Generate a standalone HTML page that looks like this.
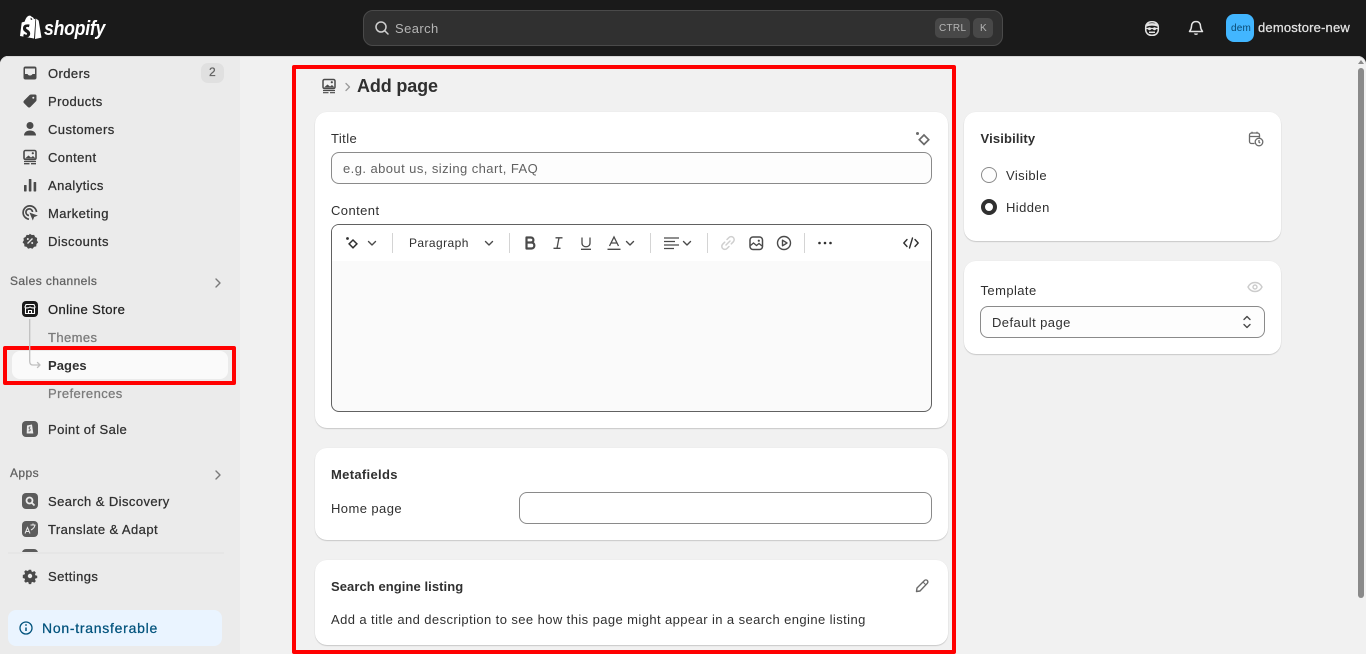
<!DOCTYPE html>
<html lang="en"><head><meta charset="utf-8"><title>Add page</title>
<style>
*{box-sizing:border-box}
html,body{margin:0;padding:0;width:1366px;height:654px;overflow:hidden;background:#1a1a1a;font-family:"Liberation Sans",sans-serif;color:#303030}
.a{position:absolute}
.t{position:absolute;white-space:nowrap;font-size:13px;line-height:16px;letter-spacing:.42px;color:#303030}
.m{-webkit-text-stroke:.25px currentColor}
.b{font-weight:700;letter-spacing:.1px}
.g{color:#616161}
.i{position:absolute;width:20px;height:20px;overflow:visible}
.card{position:absolute;background:#fff;border-radius:12px;box-shadow:0 1px 1px rgba(0,0,0,.16),0 0 1px rgba(0,0,0,.08)}
.input{position:absolute;background:#fdfdfd;border:1px solid #8a8a8a;border-radius:8px}
.sep{position:absolute;top:233px;width:1px;height:20px;background:#d4d4d4}
.red{position:absolute;border:4px solid #f00;box-sizing:border-box}
</style></head>
<body>
<!-- top bar -->
<div class="a" style="left:0;top:0;width:1366px;height:56px;background:#1a1a1a"></div>
<svg class="a" style="left:20px;top:15px" width="22" height="26" viewBox="0 0 22 26"><path d="M15.500 3.600 14 4.100C13.600 2.900 13 2 11.800 2 11.300 1 10.500.6 9.900.6 6.700.6 5.200 4.600 4.700 6.600L2.400 7.300C1.700 7.500 1.700 7.500 1.600 8.200L0 21 14 23.500ZM12.500 4.500 10.800 5C10.800 4.200 10.700 3.300 10.400 2.700 11.400 2.800 12 3.700 12.500 4.500Z" fill="#fff"/><path d="M16.200 3.600 15 24 21.500 22.600 18.700 5.800C18.600 5.500 18.400 5.300 18.200 5.300Z" fill="#fff"/><path d="M9.600 9.600 8.900 12.200C7.600 11.600 6 11.800 6 13 6 14.500 10.200 15 10.200 18.500 10.200 21.200 8.400 22.600 6 22.400 4.700 22.300 3.700 21.700 3.200 21.200L3.900 18.800C4.800 19.500 7 20.500 7.100 18.900 7.200 17.200 3.200 17.200 3 13.600 2.900 10.600 5 8.700 9.600 9.600Z" fill="#1a1a1a"/></svg>
<div class="t" style="left:44px;top:17px;font-size:20px;line-height:24px;font-weight:700;font-style:italic;color:#fff;letter-spacing:-.3px;transform:scaleX(.885);transform-origin:0 50%">shopify</div>

<div class="a" style="left:363px;top:10px;width:640px;height:36px;background:#303030;border:1px solid #4a4a4a;border-radius:10px"></div>
<svg class="i" style="left:372px;top:18px" viewBox="0 0 20 20" fill="none" stroke="#cfcfcf" stroke-width="1.500" stroke-linecap="round"><circle cx="9" cy="9" r="5"/><path d="m13 13 3 3"/></svg>
<div class="t" style="left:395px;top:21px;color:#b5b5b5">Search</div>
<div class="a" style="left:935px;top:18px;width:35px;height:20px;background:#484848;border-radius:5px"></div>
<div class="t" style="left:939px;top:21px;font-size:10px;letter-spacing:.3px;color:#b5b5b5">CTRL</div>
<div class="a" style="left:973px;top:18px;width:20px;height:20px;background:#484848;border-radius:5px"></div>
<div class="t" style="left:980px;top:21px;font-size:10px;letter-spacing:0;color:#b5b5b5">K</div>

<svg class="i" style="left:1142px;top:18px" viewBox="0 0 20 20" fill="none"><rect x="3.700" y="3.700" width="12.600" height="13.600" rx="5.500" fill="#1a1a1a" stroke="#e3e3e3" stroke-width="1.500"/><path d="M4 7.500c4-1.500 8-1.500 12 0" stroke="#e3e3e3" stroke-width="2.500"/><path d="M4 10.500h12" stroke="#e3e3e3" stroke-width="1.300"/><circle cx="7.500" cy="10.700" r="1.500" fill="#e3e3e3"/><circle cx="12.500" cy="10.700" r="1.500" fill="#e3e3e3"/><path d="M7 14.300h6" stroke="#e3e3e3" stroke-width="1.500"/></svg>
<svg class="i" style="left:1186px;top:18px" viewBox="0 0 20 20" fill="none" stroke="#e3e3e3" stroke-width="1.500" stroke-linejoin="round"><path d="M10 3.500c-2.800 0-4.500 2-4.500 4.600 0 2.700-1 4-2 5.400h13c-1-1.400-2-2.700-2-5.400 0-2.600-1.700-4.600-4.500-4.600Z"/><path d="M8.500 15.500c.4 1 2.600 1 3 0"/></svg>
<div class="a" style="left:1226px;top:14px;width:28px;height:28px;background:#42b6ff;border-radius:8px"></div>
<div class="t" style="left:1231px;top:21px;font-size:10px;letter-spacing:.2px;color:#0a4a72">dem</div>
<div class="t m" style="left:1258px;top:20px;color:#e3e3e3;letter-spacing:.18px">demostore-new</div>

<!-- main surfaces -->
<div class="a" style="left:0;top:56px;width:1366px;height:598px;background:#f1f1f1;border-radius:8px 8px 0 0;box-shadow:inset 0 1px 0 #d8d8d8"></div>
<div class="a" style="left:0;top:56px;width:240px;height:598px;background:#ebebeb;border-radius:8px 0 0 0;box-shadow:inset 0 1px 0 #d8d8d8"></div>
<div class="a" style="left:1358px;top:68px;width:6px;height:530px;background:#8a8a8a;border-radius:3px"></div>
<div class="a" style="left:1358px;top:60px;width:0;height:0;border:3px solid transparent;border-bottom:4px solid #8a8a8a;border-top:0"></div>

<!-- sidebar -->
<svg class="i" style="left:20px;top:63px" viewBox="0 0 20 20" fill="#4a4a4a"><path d="M5.500 3.500h9a2 2 0 0 1 2 2v9a2 2 0 0 1-2 2h-9a2 2 0 0 1-2-2v-9a2 2 0 0 1 2-2Zm-.5 2v5.500h2.500c.5 1 1.300 1.500 2.500 1.500s2-.5 2.500-1.500H15V5.500Z" fill-rule="evenodd"/></svg>
<div class="t m" style="left:48px;top:66px">Orders</div>
<div class="a" style="left:201px;top:63px;width:23px;height:20px;background:#e0e0e0;border-radius:7px"></div>
<div class="t m g" style="left:209px;top:64px;font-size:12px;letter-spacing:0">2</div>

<svg class="i" style="left:20px;top:91px" viewBox="0 0 20 20" fill="#4a4a4a"><path d="M11 3.500h4a1.500 1.500 0 0 1 1.500 1.500v4c0 .6-.2 1-.6 1.400l-5.400 5.500a2 2 0 0 1-2.800 0l-3.600-3.600a2 2 0 0 1 0-2.800L9.600 4c.4-.3.9-.5 1.400-.5Z"/><circle cx="13.300" cy="6.700" r="1" fill="#ebebeb"/></svg>
<div class="t m" style="left:48px;top:94px">Products</div>

<svg class="i" style="left:20px;top:119px" viewBox="0 0 20 20" fill="#4a4a4a"><circle cx="10" cy="6.500" r="3.500"/><path d="M4 16.500c0-3 2.500-5 6-5s6 2 6 5Z"/></svg>
<div class="t m" style="left:48px;top:122px">Customers</div>

<svg class="i" style="left:20px;top:147px" viewBox="0 0 20 20"><rect x="4" y="3.500" width="12" height="9" rx="1.500" fill="none" stroke="#4a4a4a" stroke-width="1.600"/><path d="M5 11.500 8.500 8.500l2.500 2 2-1.500 2 2v.5Z" fill="#4a4a4a"/><circle cx="12.800" cy="6.200" r="1.100" fill="#4a4a4a"/><path d="M4 14.500h12M4 16.700h5.500M11 16.700h5" stroke="#4a4a4a" stroke-width="1.300"/></svg>
<div class="t m" style="left:48px;top:150px">Content</div>

<svg class="i" style="left:20px;top:175px" viewBox="0 0 20 20" fill="#4a4a4a"><rect x="4" y="10" width="2.600" height="6.500" rx=".6"/><rect x="8.800" y="4" width="2.600" height="12.500" rx=".6"/><rect x="13.600" y="7" width="2.600" height="9.500" rx=".6"/></svg>
<div class="t m" style="left:48px;top:178px">Analytics</div>

<svg class="i" style="left:20px;top:203px" viewBox="0 0 20 20" fill="none" stroke="#4a4a4a" stroke-width="1.700"><path d="M9 16.200A6.700 6.700 0 1 1 16.500 9"/><path d="M9 12.500a3.300 3.300 0 1 1 3.500-3.500"/><path d="m10 10 7 2.600-3 1.100-1.200 3Z" fill="#4a4a4a" stroke-width=".6"/></svg>
<div class="t m" style="left:48px;top:206px">Marketing</div>

<svg class="i" style="left:20px;top:231px" viewBox="0 0 20 20"><path d="M10 2.500l2 1.300 2.400-.2 1 2.200 2.100 1.100-.3 2.400 1.300 2-1.700 1.700-.2 2.400-2.300.5-1.500 1.900-2.200-.8-2.300.8-1.500-1.900-2.300-.5-.2-2.400-1.700-1.700 1.300-2-.3-2.400 2.100-1.100 1-2.200 2.400.2Z" fill="#4a4a4a" transform="translate(0 .3) scale(.98)"/><path d="M7.500 12.500l5-5" stroke="#ebebeb" stroke-width="1.300"/><circle cx="7.800" cy="8" r="1" fill="#ebebeb"/><circle cx="12.200" cy="12" r="1" fill="#ebebeb"/></svg>
<div class="t m" style="left:48px;top:234px">Discounts</div>

<div class="t m g" style="left:10px;top:273px;font-size:12px;letter-spacing:.42px">Sales channels</div>
<svg class="i" style="left:208px;top:273px" viewBox="0 0 20 20" fill="none" stroke="#7a7a7a" stroke-width="1.400" stroke-linecap="round" stroke-linejoin="round"><path d="m8 6 4 4-4 4"/></svg>

<div class="a" style="left:22px;top:301px;width:16px;height:16px;background:#1a1a1a;border-radius:4px"></div>
<svg class="a" style="left:22px;top:301px" width="16" height="16" viewBox="0 0 16 16" fill="none" stroke="#fff" stroke-width="1.100"><path d="M3.500 6.500v6h9v-6M3 6l1-2.500h8L13 6c0 1.300-3.300 1.300-5 0-1.700 1.300-5 1.300-5 0ZM6.500 12.500V9.500h3v3"/></svg>
<div class="t m" style="left:48px;top:302px;color:#1f1f1f">Online Store</div>
<div class="t m" style="left:48px;top:330px;color:#7a7a7a">Themes</div>

<div class="a" style="left:12px;top:351px;width:216px;height:28px;background:#fafafa;border-radius:8px"></div>
<svg class="a" style="left:28px;top:319px;z-index:2" width="14" height="52" viewBox="0 0 14 52" fill="none" stroke="#c0c0c0" stroke-width="1.300" stroke-linecap="round" stroke-linejoin="round"><path d="M1.700 0v42c0 2.500 1 4 3 4h7.300M9.500 43.500 12 46l-2.500 2.500"/></svg>
<div class="t b" style="left:48px;top:358px;color:#303030;letter-spacing:.08px">Pages</div>
<div class="t m" style="left:48px;top:386px;color:#7a7a7a">Preferences</div>
<div class="red" style="left:3px;top:346px;width:233px;height:39px;border-radius:2px"></div>

<div class="a" style="left:22px;top:421px;width:16px;height:16px;background:#5c5c5c;border-radius:4px"></div>
<svg class="a" style="left:22px;top:421px" width="16" height="16" viewBox="0 0 16 16"><path d="M5 4.500 10 3.500 11.300 12.500H4.700Z" fill="#ebebeb"/><path d="M8.500 6c-1.600-.3-1.900 1.200-.8 2 1 .8.500 2.300-1.200 1.800" fill="none" stroke="#5c5c5c" stroke-width=".9"/></svg>
<div class="t m" style="left:48px;top:422px">Point of Sale</div>

<div class="t m g" style="left:10px;top:465px;font-size:12px;letter-spacing:.42px">Apps</div>
<svg class="i" style="left:208px;top:465px" viewBox="0 0 20 20" fill="none" stroke="#7a7a7a" stroke-width="1.400" stroke-linecap="round" stroke-linejoin="round"><path d="m8 6 4 4-4 4"/></svg>

<div class="a" style="left:22px;top:493px;width:16px;height:16px;background:#5c5c5c;border-radius:4px"></div>
<svg class="a" style="left:22px;top:493px" width="16" height="16" viewBox="0 0 16 16" fill="none" stroke="#ebebeb" stroke-width="1.800"><circle cx="7.500" cy="7.500" r="3"/><path d="m10 10 2.500 2.500"/></svg>
<div class="t m" style="left:48px;top:494px">Search &amp; Discovery</div>

<div class="a" style="left:22px;top:521px;width:16px;height:16px;background:#5c5c5c;border-radius:4px"></div>
<svg class="a" style="left:22px;top:521px" width="16" height="16" viewBox="0 0 16 16" fill="none" stroke="#ebebeb" stroke-width="1"><path d="m3 12.500 2.500-6 2.500 6M4 10.500h3M8.500 4h5M11 2.500v1.500M13 4c-.5 2.500-2 4-4 5"/></svg>
<div class="t m" style="left:48px;top:522px">Translate &amp; Adapt</div>

<div class="a" style="left:22px;top:549px;width:16px;height:16px;background:#5c5c5c;border-radius:4px"></div>
<div class="t m" style="left:48px;top:550px">Flow</div>

<!-- sidebar footer -->
<div class="a" style="left:0;top:553px;width:240px;height:101px;background:#ebebeb"></div>
<div class="a" style="left:8px;top:552px;width:216px;height:2px;background:#e6e6e6"></div>
<svg class="i" style="left:20px;top:566px" viewBox="0 0 20 20"><path d="M8.700 3h2.600l.4 1.900 1.300.6 1.700-1 1.800 1.800-1 1.700.6 1.300 1.900.4v2.600l-1.900.4-.6 1.300 1 1.700-1.800 1.800-1.700-1-1.300.6-.4 1.900H8.700l-.4-1.900-1.300-.6-1.700 1-1.800-1.800 1-1.700-.6-1.300-1.900-.4V8.700l1.900-.4.6-1.300-1-1.700 1.800-1.800 1.700 1 1.300-.6Z" fill="#4a4a4a" transform="translate(1 1) scale(.9)"/><circle cx="10" cy="10" r="2.200" fill="#ebebeb"/></svg>
<div class="t m" style="left:48px;top:569px">Settings</div>

<div class="a" style="left:8px;top:610px;width:214px;height:36px;background:#eaf4ff;border-radius:8px"></div>
<svg class="a" style="left:18px;top:620px" width="16" height="16" viewBox="0 0 16 16" fill="none" stroke="#00527c" stroke-width="1.300"><circle cx="8" cy="8" r="6"/><path d="M8 7.500v3.500" stroke-width="1.500"/><circle cx="8" cy="5" r=".9" fill="#00527c" stroke="none"/></svg>
<div class="t m" style="left:42px;top:620px;font-size:14px;letter-spacing:.73px;color:#00527c">Non-transferable</div>

<!-- header -->
<svg class="i" style="left:319px;top:76px" viewBox="0 0 20 20"><rect x="4" y="3.500" width="12" height="9" rx="1.500" fill="none" stroke="#4a4a4a" stroke-width="1.500"/><path d="M5 11.500 8.500 8.500l2.500 2 2-1.500 2 2v.5Z" fill="#4a4a4a"/><circle cx="12.800" cy="6.200" r="1.100" fill="#4a4a4a"/><path d="M4 14.500h12M4 16.700h5.500M11 16.700h5" stroke="#4a4a4a" stroke-width="1.200"/></svg>
<svg class="a" style="left:344px;top:81px" width="8" height="12" viewBox="0 0 8 12" fill="none" stroke="#9a9a9a" stroke-width="1.300" stroke-linecap="round" stroke-linejoin="round"><path d="m2 2.500 3.500 3.500L2 9.500"/></svg>
<div class="t b" style="left:357px;top:75px;font-size:18px;line-height:22px;letter-spacing:-.15px">Add page</div>

<!-- title/content card -->
<div class="card" style="left:315px;top:112px;width:633px;height:316px"></div>
<div class="t" style="left:331px;top:131px">Title</div>
<svg class="i" style="left:913px;top:129px" viewBox="0 0 20 20" fill="none" stroke="#6a6a6a" stroke-width="1.700"><circle cx="4.500" cy="4.500" r="1.500" fill="#6a6a6a" stroke="none"/><path d="m11 6 4.700 4.700-4.700 4.700-4.700-4.700Z"/></svg>
<div class="input" style="left:331px;top:152px;width:601px;height:32px"></div>
<div class="t" style="left:343px;top:161px;color:#616161;letter-spacing:.43px">e.g. about us, sizing chart, FAQ</div>
<div class="t" style="left:331px;top:203px">Content</div>

<div class="input" style="left:331px;top:224px;width:601px;height:188px;background:#fafafa;border-color:#616161"></div>
<div class="a" style="left:332px;top:225px;width:599px;height:36px;background:#fff;border-radius:7px 7px 0 0"></div>

<svg class="i" style="left:343px;top:233px" viewBox="0 0 20 20" fill="none" stroke="#303030" stroke-width="1.500"><circle cx="4.500" cy="5.500" r="1.400" fill="#303030" stroke="none"/><path d="m10 7 3.900 3.900-3.900 3.900-3.900-3.900Z"/></svg>
<svg class="i" style="left:362px;top:233px" viewBox="0 0 20 20" fill="none" stroke="#4a4a4a" stroke-width="1.400" stroke-linecap="round" stroke-linejoin="round"><path d="m6.500 8.500 3.500 3.500 3.500-3.500"/></svg>
<div class="sep" style="left:392px"></div>
<div class="t" style="left:409px;top:235px;font-size:12px;letter-spacing:.42px">Paragraph</div>
<svg class="i" style="left:479px;top:233px" viewBox="0 0 20 20" fill="none" stroke="#4a4a4a" stroke-width="1.400" stroke-linecap="round" stroke-linejoin="round"><path d="m6.500 8.500 3.500 3.500 3.500-3.500"/></svg>
<div class="sep" style="left:509px"></div>
<svg class="i" style="left:520px;top:233px" viewBox="0 0 20 20" fill="none" stroke="#4a4a4a" stroke-width="2.200" stroke-linejoin="round"><path d="M6.500 4.500h4.300c3.500 0 3.500 5 0 5H6.500Zm0 5h5c3.800 0 3.800 6 0 6h-5Z"/></svg>
<svg class="i" style="left:548px;top:233px" viewBox="0 0 20 20" fill="none" stroke="#4a4a4a" stroke-width="1.300"><path d="M7.500 4.800h7M5.500 15.300h7M11 4.800 9 15.300"/></svg>
<svg class="i" style="left:576px;top:233px" viewBox="0 0 20 20" fill="none" stroke="#4a4a4a" stroke-width="1.300"><path d="M6 4.500v5.500c0 5 8 5 8 0V4.500M5 16.300h10"/></svg>
<svg class="i" style="left:604px;top:233px" viewBox="0 0 20 20" fill="none" stroke="#4a4a4a" stroke-width="1.300"><path d="m5.500 13 4.500-9 4.500 9M7.200 10h5.600M3.500 16.300h13"/></svg>
<svg class="i" style="left:620px;top:233px" viewBox="0 0 20 20" fill="none" stroke="#4a4a4a" stroke-width="1.400" stroke-linecap="round" stroke-linejoin="round"><path d="m6.500 8.500 3.500 3.500 3.500-3.500"/></svg>
<div class="sep" style="left:650px"></div>
<svg class="i" style="left:662px;top:233px" viewBox="0 0 20 20" fill="none" stroke="#4a4a4a" stroke-width="1.300"><path d="M2 5h15M2 8.500h11M2 12h15M2 15.500h10"/></svg>
<svg class="i" style="left:677px;top:233px" viewBox="0 0 20 20" fill="none" stroke="#4a4a4a" stroke-width="1.400" stroke-linecap="round" stroke-linejoin="round"><path d="m6.500 8.500 3.500 3.500 3.500-3.500"/></svg>
<div class="sep" style="left:707px"></div>
<svg class="i" style="left:718px;top:233px" viewBox="0 0 20 20" fill="none" stroke="#cfcfcf" stroke-width="1.500" stroke-linecap="round"><path d="M9 6.500l2-2a3 3 0 0 1 4.300 4.300l-2 2M11 13.500l-2 2a3 3 0 0 1-4.300-4.300l2-2M8 12l4-4"/></svg>
<svg class="i" style="left:746px;top:233px" viewBox="0 0 20 20" fill="none" stroke="#4a4a4a" stroke-width="1.500"><rect x="4" y="4" width="12.500" height="12.500" rx="3"/><path d="m4.500 12.500 3-2.500 3 2.500 2.500-2 3 2.500" stroke-width="1.300"/><circle cx="12.800" cy="7.700" r="1.100" fill="#4a4a4a" stroke="none"/></svg>
<svg class="i" style="left:774px;top:233px" viewBox="0 0 20 20" fill="none" stroke="#4a4a4a" stroke-width="1.400"><circle cx="10" cy="10" r="6.500"/><path d="M8.500 7.200 13 10l-4.500 2.800Z" stroke-linejoin="round"/></svg>
<div class="sep" style="left:804px"></div>
<svg class="i" style="left:815px;top:233px" viewBox="0 0 20 20" fill="#303030"><circle cx="4.500" cy="10" r="1.300"/><circle cx="10" cy="10" r="1.300"/><circle cx="15.500" cy="10" r="1.300"/></svg>
<svg class="i" style="left:901px;top:233px" viewBox="0 0 20 20" fill="none" stroke="#303030" stroke-width="1.400" stroke-linecap="round" stroke-linejoin="round"><path d="M6 6.500 2.800 10 6 13.500M14 6.500l3.200 3.500-3.200 3.500M11.500 5 8.500 15"/></svg>

<!-- metafields -->
<div class="card" style="left:315px;top:448px;width:633px;height:92px"></div>
<div class="t b" style="left:331px;top:467px;letter-spacing:.32px">Metafields</div>
<div class="t" style="left:331px;top:501px">Home page</div>
<div class="input" style="left:519px;top:492px;width:413px;height:32px;background:#fff"></div>

<!-- search engine -->
<div class="card" style="left:315px;top:560px;width:633px;height:85px"></div>
<div class="t b" style="left:331px;top:579px;letter-spacing:.07px">Search engine listing</div>
<svg class="i" style="left:912px;top:576px" viewBox="0 0 20 20" fill="none" stroke="#6a6a6a" stroke-width="1.400" stroke-linejoin="round"><path d="M4.500 15.500 5 12l7.500-7.500a1.800 1.800 0 0 1 2.800 2.800L8 15Z"/><path d="m11 6 3 3" stroke-width="1.100"/></svg>
<div class="t" style="left:331px;top:612px;letter-spacing:.41px">Add a title and description to see how this page might appear in a search engine listing</div>

<div class="red" style="left:292px;top:65px;width:664px;height:589px;border-radius:2px"></div>

<!-- visibility -->
<div class="card" style="left:964px;top:112px;width:317px;height:129px"></div>
<div class="t b" style="left:980.500px;top:131px;letter-spacing:.15px">Visibility</div>
<svg class="i" style="left:1245px;top:129px" viewBox="0 0 20 20" fill="none" stroke="#6a6a6a" stroke-width="1.300"><path d="M9.500 14.500H6.500a2 2 0 0 1-2-2V6a2 2 0 0 1 2-2h6a2 2 0 0 1 2 2v2.500M4.500 7.500h10M7 2.800v2M12 2.800v2"/><circle cx="14" cy="13" r="3.800"/><path d="M14 11v2.200l1.200.8"/></svg>
<div class="a" style="left:981px;top:167px;width:16px;height:16px;border:1px solid #8a8a8a;border-radius:50%;background:#fdfdfd"></div>
<div class="t" style="left:1006px;top:168px">Visible</div>
<div class="a" style="left:981px;top:199px;width:16px;height:16px;border:4.500px solid #303030;border-radius:50%;background:#fff"></div>
<div class="t" style="left:1006px;top:200px">Hidden</div>

<!-- template -->
<div class="card" style="left:964px;top:261px;width:317px;height:93px"></div>
<div class="t" style="left:980.500px;top:283px">Template</div>
<svg class="i" style="left:1245px;top:277px" viewBox="0 0 20 20" fill="none" stroke="#cccccc" stroke-width="1.400"><path d="M3 10c1.500-3 4-4.500 7-4.500s5.500 1.500 7 4.500c-1.500 3-4 4.500-7 4.500S4.500 13 3 10Z"/><circle cx="10" cy="10" r="2"/></svg>
<div class="input" style="left:980px;top:306px;width:285px;height:32px"></div>
<div class="t" style="left:992px;top:315px">Default page</div>
<svg class="i" style="left:1237px;top:312px" viewBox="0 0 20 20" fill="none" stroke="#4a4a4a" stroke-width="1.400" stroke-linecap="round" stroke-linejoin="round"><path d="m7 7.500 3-3 3 3M7 12.500l3 3 3-3"/></svg>
</body></html>
